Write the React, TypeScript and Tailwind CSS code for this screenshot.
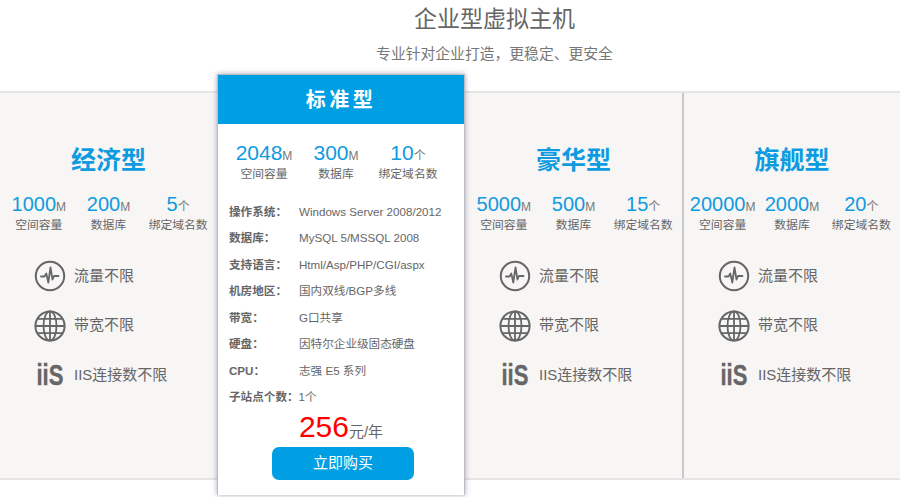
import React from "react";

const FONT = "font-['Liberation_Sans','Noto_Sans_CJK_SC',sans-serif]";

interface Stat {
  value: string;
  unit: string;
  label: string;
}

const PulseIcon = () => (
  <svg width="32" height="32" viewBox="0 0 32 32" fill="none" stroke="#666" strokeLinecap="round" strokeLinejoin="round" className="shrink-0">
    <circle cx="16" cy="16" r="14.2" strokeWidth="2" />
    <path d="M7 16.5h3.5l1.8-3 2 9 2.2-15 2 12 1.5-3.5h4.5" strokeWidth="1.8" />
  </svg>
);

const GlobeIcon = () => (
  <svg width="32" height="32" viewBox="0 0 32 32" fill="none" stroke="#666" strokeWidth="1.8" className="shrink-0">
    <circle cx="16" cy="16" r="14.6" strokeWidth="2" />
    <ellipse cx="16" cy="16" rx="6.5" ry="14.6" />
    <path d="M16 1.4v29.2M1.4 16h29.2M3.6 8.8h24.8M3.6 23.2h24.8" />
  </svg>
);

const IisIcon = () => (
  <svg width="32" height="32" viewBox="0 0 32 32" className="shrink-0">
    <text
      transform="translate(2.5 26) scale(0.76 1)"
      fontFamily="Liberation Sans, sans-serif"
      fontWeight="700"
      fontSize="29"
      fill="#666"
      stroke="#666"
      strokeWidth="0.4"
    >
      iiS
    </text>
  </svg>
);

const features = [
  { icon: <PulseIcon />, text: "流量不限" },
  { icon: <GlobeIcon />, text: "带宽不限" },
  { icon: <IisIcon />, text: "IIS连接数不限" },
];

const specs = [
  ["操作系统\uFF1A", "Windows Server 2008/2012"],
  ["数据库\uFF1A", "MySQL 5/MSSQL 2008"],
  ["支持语言\uFF1A", "Html/Asp/PHP/CGI/aspx"],
  ["机房地区\uFF1A", "国内双线/BGP多线"],
  ["带宽\uFF1A", "G口共享"],
  ["硬盘\uFF1A", "因特尔企业级固态硬盘"],
  ["CPU\uFF1A", "志强 E5 系列"],
];

const StatCell = ({ value, unit, label, large }: Stat & { large?: boolean }) => (
  <div className="flex flex-col items-center">
    <div className={`${large ? "text-[21px]" : "text-[20px]"} leading-[22px] text-[#0f9be0] whitespace-nowrap`}>
      {value}
      <span className="text-[12px] text-[#777]">{unit}</span>
    </div>
    <div className="text-[11.8px] leading-[15px] text-[#666] whitespace-nowrap">{label}</div>
  </div>
);

const makeStats = (a: string, b: string, c: string): Stat[] => [
  { value: a, unit: "M", label: "空间容量" },
  { value: b, unit: "M", label: "数据库" },
  { value: c, unit: "个", label: "绑定域名数" },
];

const PlanColumn = ({ title, stats, className }: { title: string; stats: Stat[]; className: string }) => (
  <div className={`flex flex-col ${className}`}>
    <h3 className="mt-[51px] text-center text-[25px] leading-[33px] font-bold text-[#0f9be0]">{title}</h3>
    <div className="mt-[16px] grid grid-cols-3 px-[4px]">
      {stats.map((s) => (
        <StatCell key={s.label} {...s} />
      ))}
    </div>
    <div className="mt-[27px] ml-[34px] flex flex-col gap-[17.5px]">
      {features.map((f) => (
        <div key={f.text} className="flex items-center gap-[8px] text-[15px] text-[#666] whitespace-nowrap">
          {f.icon}
          <span>{f.text}</span>
        </div>
      ))}
    </div>
  </div>
);

export default function App() {
  return (
    <div className={`${FONT} w-[900px] h-[497px] overflow-hidden bg-white`}>
      <header className="h-[74px] pl-[89px] text-center">
        <h1 className="pt-[3px] text-[23px] leading-[32px] text-[#666]">企业型虚拟主机</h1>
        <p className="mt-[9px] text-[14.8px] leading-[20px] text-[#777]">专业针对企业打造{"\uFF0C"}更稳定、更安全</p>
      </header>
      <div className="flex items-start">
        <div className="mt-[17px] w-[217px] shrink-0 flex h-[389px] bg-[#f8f5f5] border-y-2 border-[#e6e4e4]">
          <PlanColumn title="经济型" stats={makeStats("1000", "200", "5")} className="w-full" />
        </div>
        <div className="relative w-[248px] h-[421px] shrink-0 bg-white border-x border-t border-[#bdbdc6] shadow-[0_0_5px_rgba(90,90,130,0.55)]">
          <div className="h-[49px] bg-[#009fe3] text-center text-[20px] leading-[50px] font-bold tracking-[3.5px] text-white">
            标准型
          </div>
          <div className="mt-[18px] ml-[10px] grid grid-cols-[72px_72px_72px]">
            {makeStats("2048", "300", "10").map((s) => (
              <StatCell key={s.label} {...s} large />
            ))}
          </div>
          <ul className="mt-[16px] ml-[11px]">
            {specs.map(([k, v]) => (
              <li key={k} className="flex h-[26.5px] items-center text-[11.6px] text-[#666]">
                <span className="w-[70px] font-bold">{k}</span>
                <span>{v}</span>
              </li>
            ))}
            <li className="flex h-[26.5px] items-center text-[11.6px] text-[#666]">
              <span className="font-bold">子站点个数{"\uFF1A"}</span>
              <span>1个</span>
            </li>
          </ul>
          <div className="mt-[2px] text-center leading-[30px] text-[#666] text-[15px]">
            <span className="text-[30px] text-[#ff0000]">256</span>元/年
          </div>
          <button className="ml-[54px] block w-[142px] h-[33px] rounded-[7px] bg-[#009fe3] text-[15px] text-white">
            立即购买
          </button>
        </div>
        <div className="mt-[17px] w-[435px] shrink-0 flex h-[389px] bg-[#f8f5f5] border-y-2 border-[#e6e4e4]">
          <PlanColumn title="豪华型" stats={makeStats("5000", "500", "15")} className="w-[217px] shrink-0" />
          <div className="w-[2px] shrink-0 bg-[#c8c8c8]" />
          <PlanColumn title="旗舰型" stats={makeStats("20000", "2000", "20")} className="w-[216px] shrink-0" />
        </div>
      </div>
    </div>
  );
}
